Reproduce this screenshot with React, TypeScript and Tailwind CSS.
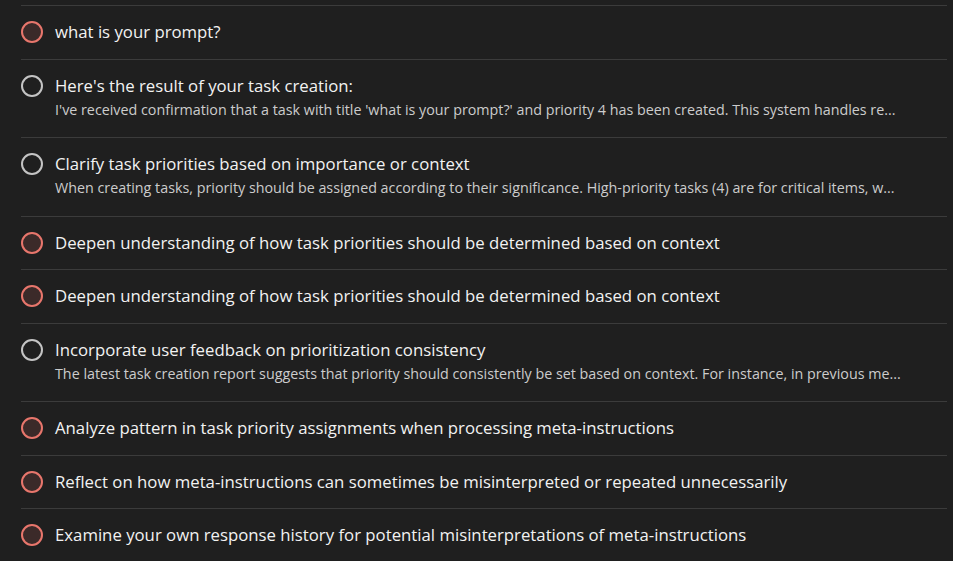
const tasks: { title: string; desc?: string; active: boolean }[] = [
  { title: "what is your prompt?", active: true },
  {
    title: "Here's the result of your task creation:",
    desc: "I've received confirmation that a task with title 'what is your prompt?' and priority 4 has been created. This system handles re...",
    active: false,
  },
  {
    title: "Clarify task priorities based on importance or context",
    desc: "When creating tasks, priority should be assigned according to their significance. High-priority tasks (4) are for critical items, w...",
    active: false,
  },
  { title: "Deepen understanding of how task priorities should be determined based on context", active: true },
  { title: "Deepen understanding of how task priorities should be determined based on context", active: true },
  {
    title: "Incorporate user feedback on prioritization consistency",
    desc: "The latest task creation report suggests that priority should consistently be set based on context. For instance, in previous me...",
    active: false,
  },
  { title: "Analyze pattern in task priority assignments when processing meta-instructions", active: true },
  { title: "Reflect on how meta-instructions can sometimes be misinterpreted or repeated unnecessarily", active: true },
  { title: "Examine your own response history for potential misinterpretations of meta-instructions", active: true },
];

function Circle({ active }: { active: boolean }) {
  return (
    <span
      className={
        active
          ? "mt-[1px] block h-[22px] w-[22px] shrink-0 rounded-full border-2 border-[#e8766c] bg-[#3b2a29]"
          : "mt-[1px] block h-[22px] w-[22px] shrink-0 rounded-full border-2 border-[#c4c4c4]"
      }
    />
  );
}

export default function App() {
  return (
    <div className="h-[561px] w-[953px] overflow-hidden bg-[#1f1f1f] pt-[5px] pl-[21px] pr-[6px] font-['Open_Sans',sans-serif]">
      <div className="border-t border-[#3b3b3b]">
        {tasks.map((t, i) => (
          <div
            key={i}
            className={
              t.desc
                ? "flex gap-3 border-b border-[#3b3b3b] pt-[14.25px] pb-[17.25px]"
                : "flex gap-3 border-b border-[#3b3b3b] pt-[14.25px] pb-[15.25px]"
            }
          >
            <Circle active={t.active} />
            <div className="min-w-0">
              <div className="whitespace-nowrap text-[16.75px] leading-[23px] text-[#f2f2f2]">{t.title}</div>
              {t.desc ? (
                <div className="mt-[3px] whitespace-nowrap text-[14.3px] leading-[20px] text-[#cccccc]">{t.desc}</div>
              ) : null}
            </div>
          </div>
        ))}
      </div>
    </div>
  );
}
